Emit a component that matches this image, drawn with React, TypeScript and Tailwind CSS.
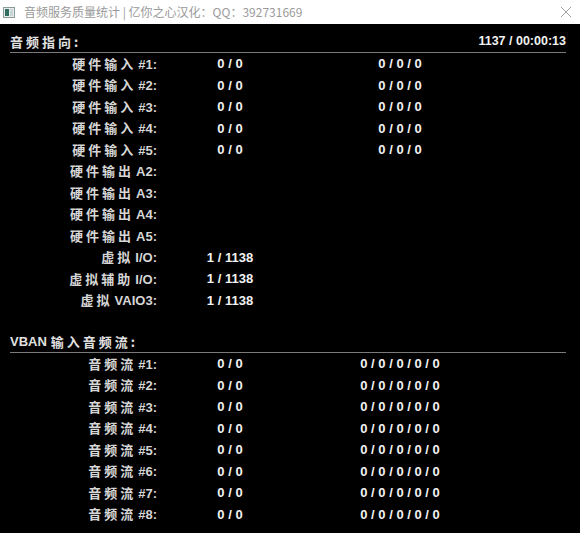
import React from "react";

const LATIN = "'Liberation Sans', Arial, 'Noto Sans CJK SC', sans-serif";
const CJK = "'Noto Sans CJK SC', 'Liberation Sans', sans-serif";

type Row = { cjk: string; tail: string; v1?: string; v2?: string };

const routing: Row[] = [
  { cjk: "硬件输入", tail: "#1:", v1: "0 / 0", v2: "0 / 0 / 0" },
  { cjk: "硬件输入", tail: "#2:", v1: "0 / 0", v2: "0 / 0 / 0" },
  { cjk: "硬件输入", tail: "#3:", v1: "0 / 0", v2: "0 / 0 / 0" },
  { cjk: "硬件输入", tail: "#4:", v1: "0 / 0", v2: "0 / 0 / 0" },
  { cjk: "硬件输入", tail: "#5:", v1: "0 / 0", v2: "0 / 0 / 0" },
  { cjk: "硬件输出", tail: "A2:" },
  { cjk: "硬件输出", tail: "A3:" },
  { cjk: "硬件输出", tail: "A4:" },
  { cjk: "硬件输出", tail: "A5:" },
  { cjk: "虚拟", tail: "I/O:", v1: "1 / 1138" },
  { cjk: "虚拟辅助", tail: "I/O:", v1: "1 / 1138" },
  { cjk: "虚拟", tail: "VAIO3:", v1: "1 / 1138" },
];

const streams: Row[] = Array.from({ length: 8 }, (_, i) => ({
  cjk: "音频流",
  tail: `#${i + 1}:`,
  v1: "0 / 0",
  v2: "0 / 0 / 0 / 0 / 0",
}));

function StatRow({ r }: { r: Row }) {
  return (
    <div className="grid grid-cols-[147px_146px_194px] h-[21.5px] items-center text-[13px] font-bold leading-none">
      <div className="text-right text-[#d6d6d6] whitespace-nowrap">
        <span className="tracking-[3px]" style={{ fontFamily: CJK }}>
          {r.cjk}
        </span>
        <span className="ml-[2px]" style={{ fontFamily: LATIN }}>
          {r.tail}
        </span>
      </div>
      <div className="text-center text-[#f2f2f2] whitespace-nowrap" style={{ fontFamily: LATIN }}>
        {r.v1 ?? ""}
      </div>
      <div className="text-center text-[#f2f2f2] whitespace-nowrap" style={{ fontFamily: LATIN }}>
        {r.v2 ?? ""}
      </div>
    </div>
  );
}

function WinIcon() {
  return (
    <svg width="12" height="11" viewBox="0 0 12 11" className="shrink-0">
      <rect x="0.5" y="0.5" width="11" height="10" fill="#e8ecec" stroke="#8a9a98" />
      <rect x="2" y="2" width="4" height="7" fill="#2f6f62" />
      <rect x="7" y="2" width="3" height="7" fill="#c9d6d4" />
    </svg>
  );
}

export default function App() {
  return (
    <div className="w-[580px] h-[533px] bg-black flex flex-col overflow-hidden">
      <div className="h-[24px] bg-white flex items-center pl-[3px] pr-[8px] shrink-0">
        <WinIcon />
        <span
          className="ml-[9px] text-[12px] text-[#9a9a9a] whitespace-nowrap leading-none"
          style={{ fontFamily: CJK }}
        >
          音频服务质量统计 | 亿你之心汉化：QQ：392731669
        </span>
        <div className="ml-auto">
          <svg width="12" height="12" viewBox="0 0 12 12">
            <path d="M1 1 L11 11 M11 1 L1 11" stroke="#a0a0a0" strokeWidth="1" fill="none" />
          </svg>
        </div>
      </div>

      <div className="pl-[10px] pr-[14px] pt-[7px]">
        <div className="h-[22px] flex items-center justify-between border-b border-[#7a7a7a] text-[13px] font-bold leading-none">
          <span className="tracking-[3px] text-[#e0e0e0]" style={{ fontFamily: CJK }}>
            音频指向:
          </span>
          <span className="text-[#f2f2f2] text-[12.5px]" style={{ fontFamily: LATIN }}>
            1137 / 00:00:13
          </span>
        </div>
        {routing.map((r, i) => (
          <StatRow key={i} r={r} />
        ))}

        <div className="h-[20px]" />

        <div className="h-[22px] flex items-center border-b border-[#7a7a7a] text-[13px] font-bold leading-none text-[#e0e0e0]">
          <span style={{ fontFamily: LATIN }}>VBAN</span>
          <span className="ml-[4px] tracking-[3px]" style={{ fontFamily: CJK }}>
            输入音频流:
          </span>
        </div>
        {streams.map((r, i) => (
          <StatRow key={i} r={r} />
        ))}
      </div>
    </div>
  );
}
